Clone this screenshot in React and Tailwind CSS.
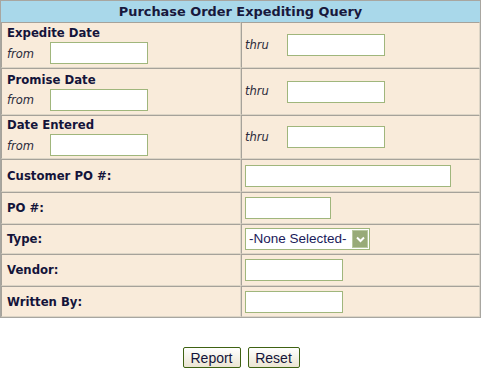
import React from "react";

const cell =
  "border border-t-[#a6a29a] border-l-[#a6a29a] border-r-[#ddd5c6] border-b-[#ddd5c6] bg-[#f9ebda]";
const label = "font-bold text-[11.7px] leading-[14px] text-[#14143a]";
const ital = "italic text-[11.5px] text-[#2a2a3a]";
const inputCls = "block h-[22px] border border-[#a0b67c] bg-white outline-none";

function DateRow({ title, h }) {
  return (
    <div className={`grid grid-cols-[240px_239px] ${h}`}>
      <div className={`${cell} flex flex-col justify-center pl-[5px]`}>
        <div className={label}>{title}</div>
        <div className="flex items-center mt-[2px]">
          <span className={`${ital} w-[43px] pt-[3px]`}>from</span>
          <input className={`${inputCls} w-[98px]`} />
        </div>
      </div>
      <div className={`${cell} flex items-center pl-[3px]`}>
        <span className={`${ital} w-[42px] pt-[1px]`}>thru</span>
        <input className={`${inputCls} w-[98px]`} />
      </div>
    </div>
  );
}

function SimpleRow({ title, h, children }) {
  return (
    <div className={`grid grid-cols-[240px_239px] ${h}`}>
      <div className={`${cell} flex items-center pl-[5px]`}>
        <span className={label}>{title}</span>
      </div>
      <div className={`${cell} flex items-center pl-[3px]`}>{children}</div>
    </div>
  );
}

export default function App() {
  return (
    <div
      className="w-[482px] h-[373px] bg-white"
      style={{ fontFamily: '"DejaVu Sans", Verdana, sans-serif' }}
    >
      <div className="w-[481px] border border-[#a8a6a0]">
        <div className="h-[21px] bg-[#a9d8ea] flex items-center justify-center">
          <span className="font-bold text-[12.9px] text-[#18183c]">
            Purchase Order Expediting Query
          </span>
        </div>
        <DateRow title="Expedite Date" h="h-[46px]" />
        <DateRow title="Promise Date" h="h-[47px]" />
        <DateRow title="Date Entered" h="h-[44px]" />
        <SimpleRow title="Customer PO #:" h="h-[33px]">
          <input className={`${inputCls} w-[206px] h-[21px]`} />
        </SimpleRow>
        <SimpleRow title="PO #:" h="h-[32px]">
          <input className={`${inputCls} w-[86px] h-[21px]`} />
        </SimpleRow>
        <SimpleRow title="Type:" h="h-[30px]">
          <div className="flex items-center w-[125px] h-[22px] border border-[#a0b67c] bg-white">
            <span
              className="flex-1 pl-[3px] text-[13.5px] leading-none text-[#1a1a5a]"
              style={{ fontFamily: '"Liberation Sans", Arial, sans-serif' }}
            >
              -None Selected-
            </span>
            <div className="w-[16px] h-[18px] mr-[1px] bg-[#98aa78] border border-[#b8c8a0] flex items-center justify-center">
              <svg width="9" height="7" viewBox="0 0 9 7">
                <path d="M1 1.5 L4.5 5 L8 1.5" stroke="white" strokeWidth="2" fill="none" />
              </svg>
            </div>
          </div>
        </SimpleRow>
        <SimpleRow title="Vendor:" h="h-[32px]">
          <input className={`${inputCls} w-[98px]`} />
        </SimpleRow>
        <SimpleRow title="Written By:" h="h-[31px]">
          <input className={`${inputCls} w-[98px]`} />
        </SimpleRow>
      </div>
      <div
        className="flex justify-center gap-[7px] mt-[29px]"
        style={{ fontFamily: '"Liberation Sans", Arial, sans-serif' }}
      >
        <button className="h-[21px] w-[58px] border border-[#3f6212] rounded-[2px] bg-gradient-to-b from-white to-[#ebe5d2] text-[14px] leading-none text-[#14143a]">
          Report
        </button>
        <button className="h-[21px] w-[52px] border border-[#3f6212] rounded-[2px] bg-gradient-to-b from-white to-[#ebe5d2] text-[14px] leading-none text-[#14143a]">
          Reset
        </button>
      </div>
    </div>
  );
}
